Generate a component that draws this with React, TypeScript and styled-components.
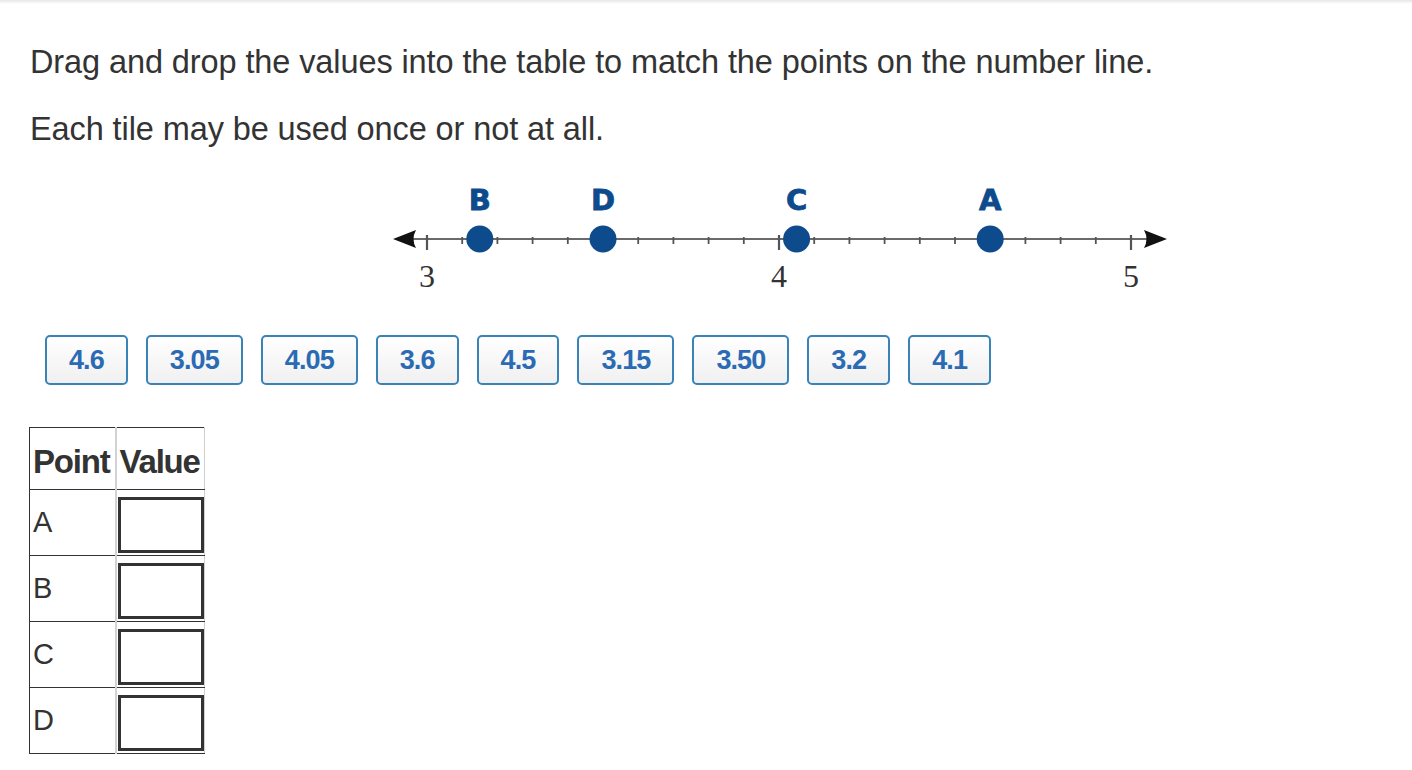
import React from "react";
import styled, { createGlobalStyle } from "styled-components";

const Global = createGlobalStyle`
  html, body { margin: 0; padding: 0; background: #ffffff; }
  body { font-family: "Liberation Sans", Arial, Helvetica, sans-serif; color: #333333; }
`;

const TopShade = styled.div`
  height: 4px;
  background: linear-gradient(#e6e6e6, #ffffff);
`;

const Content = styled.div`
  padding: 0 0 0 30px;
`;

const Prompt = styled.p<{ $top: number }>`
  margin: ${(p) => p.$top}px 0 0 0;
  font-size: 32.5px;
  line-height: 38px;
  color: #333333;
  letter-spacing: -0.1px;
`;

const LineWrap = styled.div`
  margin: 27px 0 0 350px;
  width: 800px;
  height: 125px;
`;

const TileRow = styled.div`
  display: flex;
  gap: 18px;
  margin: 35px 0 0 15px;
`;

const Tile = styled.div`
  box-sizing: border-box;
  height: 50px;
  padding: 0 22px;
  display: flex;
  align-items: center;
  justify-content: center;
  border: 2px solid #3a83b8;
  border-radius: 5px;
  background: linear-gradient(#ffffff, #f0f0f0);
  color: #2a6bb3;
  font-weight: 700;
  font-size: 27px;
  letter-spacing: -0.9px;
`;

const Table = styled.table`
  margin: 42px 0 0 -1px;
  border-collapse: collapse;
  border: 1px solid #333333;
  border-right: 1px solid #cfcfcf;
`;

const HeadCell = styled.th<{ $w: number }>`
  width: ${(p) => p.$w}px;
  height: 62px;
  padding: 6px 0 0 3px;
  box-sizing: border-box;
  text-align: left;
  font-size: 33px;
  font-weight: 700;
  letter-spacing: -1.2px;
  color: #333333;
  border-bottom: 1px solid #333333;
  &:first-child { border-right: 2px solid #d2d2d2; }
`;

const LabelCell = styled.td`
  height: 65px;
  padding: 0 0 0 3px;
  box-sizing: border-box;
  font-size: 29px;
  color: #333333;
  border-top: 1px solid #333333;
  border-right: 2px solid #d2d2d2;
  vertical-align: middle;
`;

const DropCell = styled.td`
  height: 65px;
  padding: 7px 0 2px 1px;
  box-sizing: border-box;
  border-top: 1px solid #333333;
  vertical-align: top;
`;

const DropBox = styled.div`
  box-sizing: border-box;
  width: 86px;
  height: 56px;
  border: 3px solid #333333;
  background: #ffffff;
`;

const tiles = ["4.6", "3.05", "4.05", "3.6", "4.5", "3.15", "3.50", "3.2", "4.1"];
const rows = ["A", "B", "C", "D"];

const X0 = 47;
const U = 35.2;
const Y = 64;
const pts: { l: string; v: number }[] = [
  { l: "B", v: 1.5 },
  { l: "D", v: 5 },
  { l: "C", v: 10.5 },
  { l: "A", v: 16 },
];

function NumberLine() {
  const ticks = Array.from({ length: 21 }, (_, k) => k);
  return (
    <svg width="800" height="125" viewBox="0 0 800 125">
      <line x1="28" y1={Y} x2="772" y2={Y} stroke="#6a6a6a" strokeWidth="2.2" />
      {ticks.map((k) => {
        const x = X0 + U * k;
        const major = k % 10 === 0;
        return (
          <line
            key={k}
            x1={x}
            x2={x}
            y1={major ? Y - 4 : Y - 2}
            y2={major ? Y + 11 : Y + 5}
            stroke="#555555"
            strokeWidth={major ? 2.2 : 1.8}
          />
        );
      })}
      <path d="M13,64 L36,55 Q31,64 36,73 Z" fill="#111111" />
      <path d="M787,64 L764,55 Q769,64 764,73 Z" fill="#111111" />
      {pts.map((p) => {
        const x = X0 + U * p.v;
        return (
          <g key={p.l}>
            <circle cx={x} cy={Y} r="13.5" fill="#0d4b8c" />
            <text
              x={x}
              y="35"
              textAnchor="middle"
              fontFamily="'DejaVu Sans', 'Liberation Sans', Arial, sans-serif"
              fontWeight="700"
              fontSize="29"
              fill="#0d4b8c"
              stroke="#0d4b8c"
              strokeWidth="0.8"
            >
              {p.l}
            </text>
          </g>
        );
      })}
      {["3", "4", "5"].map((n, i) => (
        <text
          key={n}
          x={X0 + U * 10 * i}
          y="112"
          textAnchor="middle"
          fontFamily="'Liberation Serif', 'Times New Roman', serif"
          fontSize="32"
          fill="#333333"
        >
          {n}
        </text>
      ))}
    </svg>
  );
}

export default function App() {
  return (
    <>
      <Global />
      <TopShade />
      <Content>
        <Prompt $top={39}>Drag and drop the values into the table to match the points on the number line.</Prompt>
        <Prompt $top={29}>Each tile may be used once or not at all.</Prompt>
        <LineWrap>
          <NumberLine />
        </LineWrap>
        <TileRow>
          {tiles.map((t) => (
            <Tile key={t}>{t}</Tile>
          ))}
        </TileRow>
        <Table>
          <thead>
            <tr>
              <HeadCell $w={86}>Point</HeadCell>
              <HeadCell $w={89}>Value</HeadCell>
            </tr>
          </thead>
          <tbody>
            {rows.map((r) => (
              <tr key={r}>
                <LabelCell>{r}</LabelCell>
                <DropCell>
                  <DropBox />
                </DropCell>
              </tr>
            ))}
          </tbody>
        </Table>
      </Content>
    </>
  );
}
